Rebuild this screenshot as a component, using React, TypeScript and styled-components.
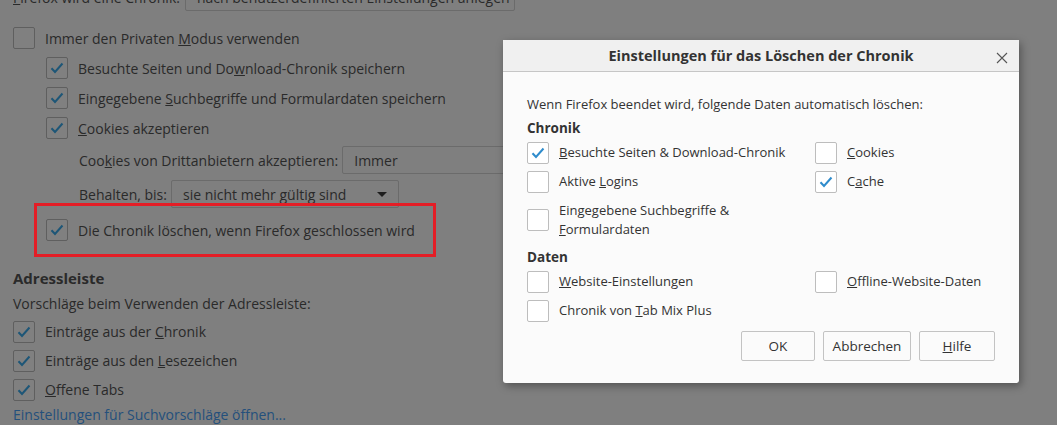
import React from 'react';
import styled, { createGlobalStyle } from 'styled-components';

const GlobalStyle = createGlobalStyle`
  html, body {
    margin: 0;
    padding: 0;
    background: #7f7f7f;
    overflow: hidden;
  }
  body {
    font-family: 'Open Sans', 'Noto Sans', sans-serif;
    font-size: 14px;
    color: #2a2a2a;
  }
`;

const Screen = styled.div`
  position: relative;
  width: 1057px;
  height: 425px;
  overflow: hidden;
`;

/* dimmed preferences page */

const Page = styled.div`
  display: flex;
  flex-direction: column;
  padding-left: 13px;
  margin-top: -18px;
`;

const TopRow = styled.div`
  display: flex;
  align-items: center;
  gap: 5px;
  height: 30px;
  margin-bottom: 11px;
  white-space: nowrap;
`;

const SelectBox = styled.div<{ $width: number }>`
  flex: none;
  width: ${(p) => p.$width}px;
  height: 28px;
  box-sizing: border-box;
  border: 1px solid #6b6b6b;
  border-radius: 2px;
  display: flex;
  align-items: center;
  justify-content: space-between;
  padding: 0 11px;
  color: #2a2a2a;
  white-space: nowrap;
  overflow: hidden;
`;

const Arrow = styled.span`
  width: 0;
  height: 0;
  border-left: 5px solid transparent;
  border-right: 5px solid transparent;
  border-top: 5px solid #1e1e1e;
`;

const CheckRow = styled.div<{ $indent?: number; $height?: number }>`
  display: flex;
  align-items: center;
  gap: 10px;
  height: ${(p) => p.$height ?? 30}px;
  padding-left: ${(p) => p.$indent ?? 0}px;
`;

const FieldRow = styled.div`
  display: flex;
  align-items: center;
  gap: 4px;
  height: 34px;
  padding-left: 66px;
  white-space: nowrap;
`;

const Box = styled.span<{ $dim?: boolean }>`
  flex: none;
  width: 22px;
  height: 22px;
  box-sizing: border-box;
  border: 1px solid ${(p) => (p.$dim ? '#5f5f5f' : '#bdbdbd')};
  border-radius: 2px;
  background: ${(p) => (p.$dim ? '#808080' : '#ffffff')};
  display: flex;
  align-items: center;
  justify-content: center;
`;

const Highlight = styled.div`
  margin: -8px 0 0 21px;
  width: 402px;
  height: 54px;
  box-sizing: border-box;
  border: 3px solid #e41e26;
  display: flex;
  align-items: center;
  padding-left: 9px;
`;

const SectionTitle = styled.div<{ $size?: number }>`
  font-weight: 700;
  font-size: ${(p) => p.$size ?? 13.5}px;
  line-height: 20px;
  height: 20px;
`;

const Line = styled.div`
  line-height: 20px;
  height: 20px;
  white-space: nowrap;
`;

const Link = styled.div`
  color: #24507c;
  line-height: 22px;
  height: 22px;
`;

/* dialog */

const Dialog = styled.div`
  position: absolute;
  left: 503px;
  top: 40px;
  width: 516px;
  height: 343px;
  background: #fbfbfb;
  border-radius: 0 0 3px 3px;
  box-shadow: 2px 3px 9px rgba(0, 0, 0, 0.35);
  display: flex;
  flex-direction: column;
  color: #333333;
  font-size: 13px;
`;

const DialogHeader = styled.div`
  position: relative;
  height: 31px;
  background: #f0f0f0;
  border-bottom: 1px solid #c6c6c6;
  display: flex;
  align-items: center;
  justify-content: center;
  font-weight: 700;
  font-size: 14.5px;
  color: #333333;
`;

const Close = styled.span`
  position: absolute;
  right: 11px;
  top: 9px;
  width: 12px;
  height: 12px;
`;

const DialogBody = styled.div`
  flex: 1;
  display: flex;
  flex-direction: column;
  padding: 22px 24px 22px 24px;
`;

const Grid = styled.div`
  display: grid;
  grid-template-columns: 288px 1fr;
`;

const Label = styled.span`
  line-height: 19px;
  white-space: nowrap;
`;

const Buttons = styled.div`
  display: flex;
  justify-content: flex-end;
  gap: 8px;
  margin-top: auto;
`;

const Button = styled.div<{ $width: number }>`
  width: ${(p) => p.$width}px;
  height: 30px;
  box-sizing: border-box;
  border: 1px solid #c3c3c3;
  border-radius: 2px;
  background: #fbfbfb;
  display: flex;
  align-items: center;
  justify-content: center;
  color: #333333;
  font-size: 13.5px;
`;

const Check = ({ dim }: { dim?: boolean }) => (
  <svg width="14" height="12" viewBox="0 0 14 12">
    <path
      d="M1.5 6.2 L5 10 L12.5 1.5"
      fill="none"
      stroke={dim ? '#1d5677' : '#2f8ccc'}
      strokeWidth="2"
    />
  </svg>
);

const CheckBox = ({ checked, dim }: { checked?: boolean; dim?: boolean }) => (
  <Box $dim={dim}>{checked && <Check dim={dim} />}</Box>
);

type Item = { text: React.ReactNode; checked?: boolean; height?: number };

const chronikRows: [Item, Item | null][] = [
  [
    { text: <><u>B</u>esuchte Seiten &amp; Download-Chronik</>, checked: true },
    { text: <><u>C</u>ookies</> },
  ],
  [
    { text: <>Aktive <u>L</u>ogins</> },
    { text: <>C<u>a</u>che</>, checked: true },
  ],
  [
    {
      text: <>Eingegebene Suchbegriffe &amp;<br /><u>F</u>ormulardaten</>,
      height: 48,
    },
    null,
  ],
];

const datenRows: [Item, Item | null][] = [
  [
    { text: <><u>W</u>ebsite-Einstellungen</> },
    { text: <><u>O</u>ffline-Website-Daten</> },
  ],
  [{ text: <>Chronik von <u>T</u>ab Mix Plus</> }, null],
];

const renderRows = (rows: [Item, Item | null][]) =>
  rows.map(([a, b], i) => (
    <React.Fragment key={i}>
      <CheckRow $height={a.height ?? 29}>
        <CheckBox checked={a.checked} />
        <Label>{a.text}</Label>
      </CheckRow>
      {b ? (
        <CheckRow $height={a.height ?? 29}>
          <CheckBox checked={b.checked} />
          <Label>{b.text}</Label>
        </CheckRow>
      ) : (
        <div />
      )}
    </React.Fragment>
  ));

const App = () => {
  return (
    <Screen>
      <GlobalStyle />
      <Page>
        <TopRow>
          <span><u>F</u>irefox wird eine Chronik:</span>
          <SelectBox $width={330}>nach benutzerdefinierten Einstellungen anlegen</SelectBox>
        </TopRow>
        <CheckRow>
          <CheckBox dim />
          <span>Immer den Privaten <u>M</u>odus verwenden</span>
        </CheckRow>
        <CheckRow $indent={33}>
          <CheckBox dim checked />
          <span>Besuchte Seiten und Do<u>w</u>nload-Chronik speichern</span>
        </CheckRow>
        <CheckRow $indent={33}>
          <CheckBox dim checked />
          <span>Eingegebene <u>S</u>uchbegriffe und Formulardaten speichern</span>
        </CheckRow>
        <CheckRow $indent={33}>
          <CheckBox dim checked />
          <span><u>C</u>ookies akzeptieren</span>
        </CheckRow>
        <FieldRow>
          <span>Coo<u>k</u>ies von Drittanbietern akzeptieren:</span>
          <SelectBox $width={180}>Immer</SelectBox>
        </FieldRow>
        <FieldRow>
          <span>Behalten, bis:</span>
          <SelectBox $width={228}>
            sie nicht mehr gültig sind
            <Arrow />
          </SelectBox>
        </FieldRow>
        <Highlight>
          <CheckRow>
            <CheckBox dim checked />
            <span>Die Chronik löschen, wenn Firefox <u>g</u>eschlossen wird</span>
          </CheckRow>
        </Highlight>
        <SectionTitle $size={15} style={{ marginTop: 11 }}>Adressleiste</SectionTitle>
        <Line style={{ marginTop: 6 }}>Vorschläge beim Verwenden der Adressleiste:</Line>
        <div style={{ marginTop: 3 }}>
          <CheckRow $height={29}>
            <CheckBox dim checked />
            <span>Einträge aus der <u>C</u>hronik</span>
          </CheckRow>
          <CheckRow $height={29}>
            <CheckBox dim checked />
            <span>Einträge aus den <u>L</u>esezeichen</span>
          </CheckRow>
          <CheckRow $height={29}>
            <CheckBox dim checked />
            <span><u>O</u>ffene Tabs</span>
          </CheckRow>
        </div>
        <Link>Einstellungen für Suchvorschläge öffnen...</Link>
      </Page>

      <Dialog>
        <DialogHeader>
          Einstellungen für das Löschen der Chronik
          <Close>
            <svg width="12" height="12" viewBox="0 0 12 12">
              <path d="M1 1 L11 11 M11 1 L1 11" stroke="#555" strokeWidth="1.1" />
            </svg>
          </Close>
        </DialogHeader>
        <DialogBody>
          <Line>Wenn Firefox beendet wird, folgende Daten automatisch löschen:</Line>
          <SectionTitle style={{ marginTop: 4 }}>Chronik</SectionTitle>
          <Grid>{renderRows(chronikRows)}</Grid>
          <SectionTitle style={{ marginTop: 3 }}>Daten</SectionTitle>
          <Grid>{renderRows(datenRows)}</Grid>
          <Buttons>
            <Button $width={74}>OK</Button>
            <Button $width={88}>Abbrechen</Button>
            <Button $width={76}><span><u>H</u>ilfe</span></Button>
          </Buttons>
        </DialogBody>
      </Dialog>
    </Screen>
  );
};

export default App;
